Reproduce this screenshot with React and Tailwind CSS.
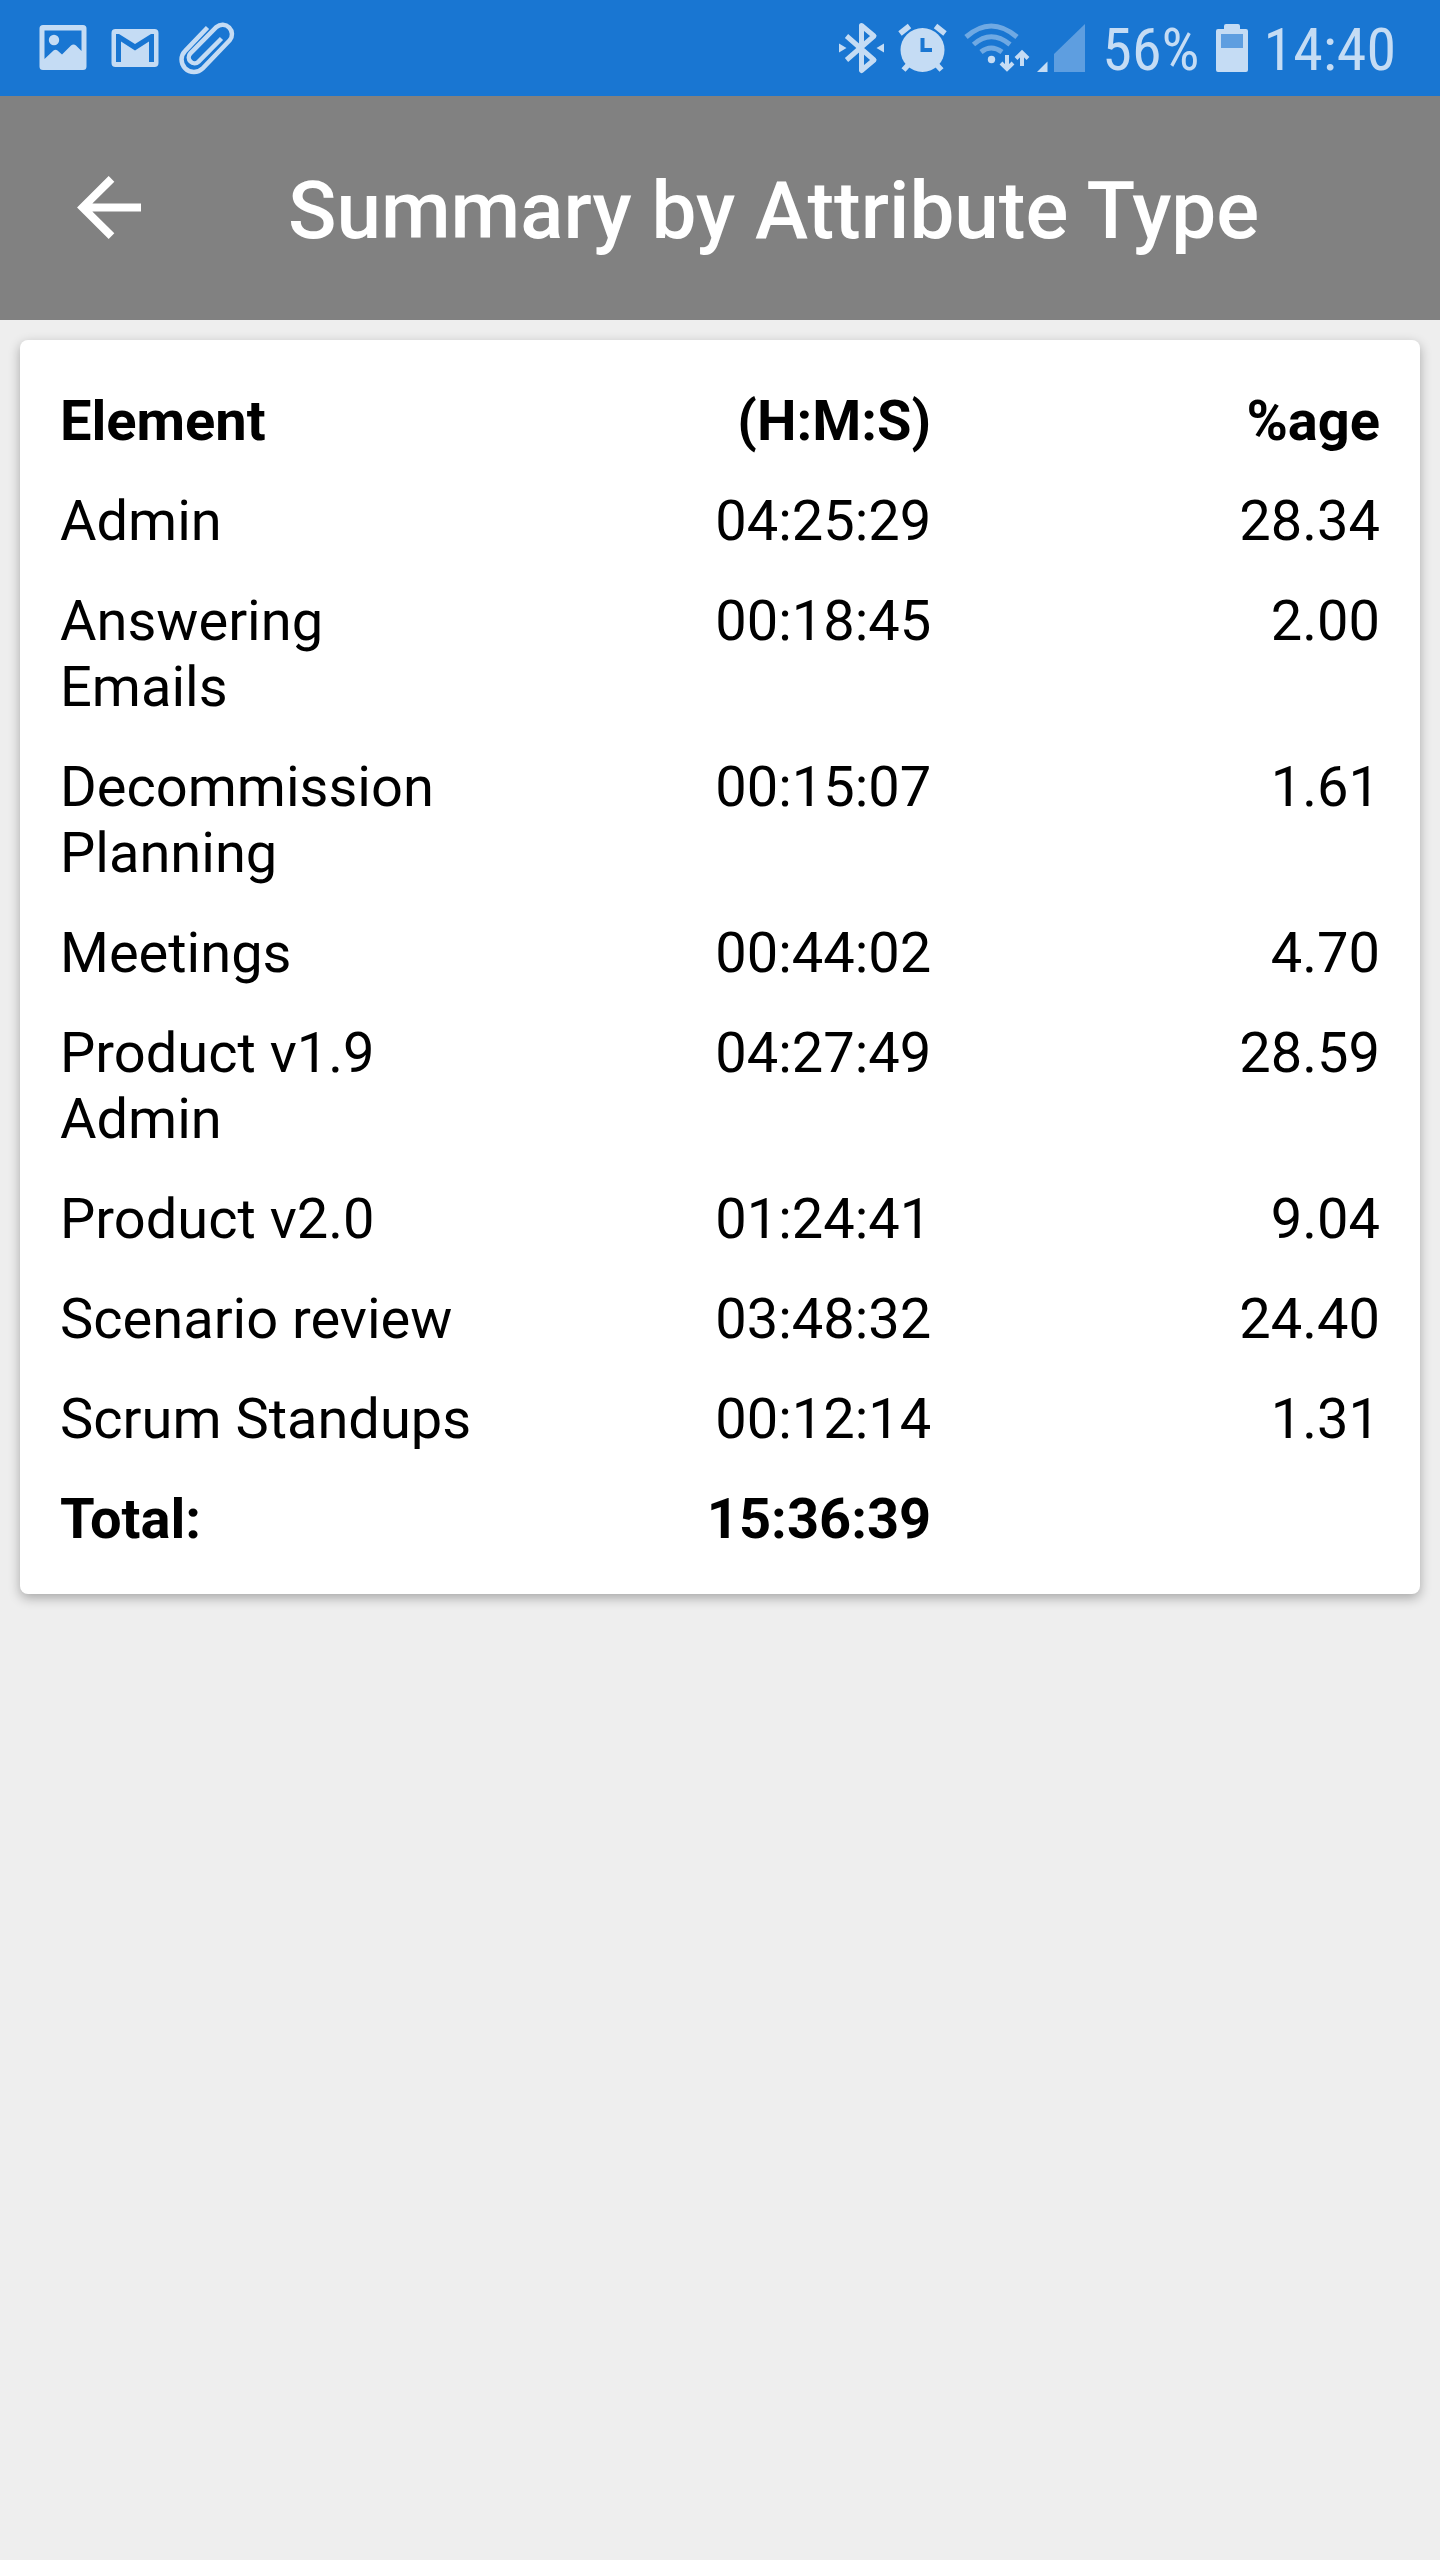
const ROWS = [
  ["Admin", "04:25:29", "28.34"],
  ["Answering Emails", "00:18:45", "2.00"],
  ["Decommission Planning", "00:15:07", "1.61"],
  ["Meetings", "00:44:02", "4.70"],
  ["Product v1.9 Admin", "04:27:49", "28.59"],
  ["Product v2.0", "01:24:41", "9.04"],
  ["Scenario review", "03:48:32", "24.40"],
  ["Scrum Standups", "00:12:14", "1.31"],
];

function NotificationIcons() {
  return (
    <svg width="240" height="96" viewBox="0 0 240 96" fill="none" aria-hidden="true">
      <path fill="currentColor" fillRule="evenodd" d="M43 25H83Q86.500 25 86.500 28.500V66.500Q86.500 70 83 70H43Q39.500 70 39.500 66.500V28.500Q39.500 25 43 25ZM44.500 30.500V59L53.500 50.500Q55.500 49 57.500 50.500L62 54.500L71 45.500Q73.500 43.500 76 45.500L81.500 51V30.500Z" />
      <circle cx="54" cy="40" r="5.200" fill="currentColor" />
      <path fill="currentColor" fillRule="evenodd" d="M115.500 29H154.500Q158.500 29 158.500 33V63Q158.500 67 154.500 67H115.500Q111.500 67 111.500 63V33Q111.500 29 115.500 29ZM116 34V62H121V41.500L135 50.500L149 41.500V62H154V34H151L135 44L119 34Z" />
      <path stroke="currentColor" strokeWidth="4.500" d="M207.500 27.500L185.200 50.800A12.400 12.400 0 0 0 202.700 68.400L229.700 40.300A9.400 9.400 0 0 0 216.500 27L190.400 53.400A5.800 5.800 0 0 0 198.600 61.600L221.500 38.500" />
    </svg>
  );
}

function ConnectivityIcons() {
  return (
    <svg width="270" height="96" viewBox="830 0 270 96" fill="none" aria-hidden="true">
      <path stroke="currentColor" strokeWidth="5" strokeLinejoin="round" d="M844.500 36L872 60L859.500 70.500V25.500L872 36L844.500 60" />
      <path fill="currentColor" d="M837 43.500L844.500 48L837 52.500ZM882 43.500L874.500 48L882 52.500Z" />
      <circle cx="920.500" cy="50" r="22" fill="currentColor" />
      <path stroke="currentColor" strokeWidth="5.500" d="M898 33.500L907.500 26M943 33.500L933.500 26M901.500 70L907 64M939.500 70L934 64" />
      <path className="stroke-[#1976d2]" strokeWidth="4" d="M920.500 38V50H930" />
      <g stroke="currentColor" strokeWidth="5" opacity="0.500">
        <path d="M964 37Q989 15 1015 37M971.500 44.500Q989 29 1008 44.500M979 52Q989 44 1000 52" />
      </g>
      <circle cx="989.500" cy="59.500" r="3.700" fill="currentColor" />
      <path stroke="currentColor" strokeWidth="4" d="M1005 55V68M999 63L1005 69L1011 63M1020 66V53M1014 58.500L1020 52.500L1026 58.500" />
      <path fill="currentColor" d="M1045.500 61.500V72H1035Z" />
      <path fill="currentColor" opacity="0.400" d="M1083 24V72H1052V54Z" />
    </svg>
  );
}

function BatteryIcon() {
  return (
    <svg width="32" height="48" viewBox="0 0 32 48" fill="currentColor" aria-hidden="true">
      <path fillRule="evenodd" d="M10 0H22Q24 0 24 2V5H30Q32 5 32 7V46Q32 48 30 48H2Q0 48 0 46V7Q0 5 2 5H8V2Q8 0 10 0ZM5 10V24H27V10Z" />
      <path opacity="0.400" d="M5 10H27V24H5Z" />
    </svg>
  );
}

export default function App() {
  return (
    <div className="min-h-screen bg-[#eeeeee] text-black font-['Roboto',sans-serif]">
      <div className="flex h-24 items-center justify-between bg-[#1976d2] pr-11 text-[#c5dcf4]">
        <NotificationIcons />
        <div className="flex items-center text-[60px] leading-none font-['Roboto_Condensed',Roboto,sans-serif]">
          <ConnectivityIcons />
          <span className="pt-1">56%</span>
          <span className="ml-4 mr-4"><BatteryIcon /></span>
          <span className="pt-1">14:40</span>
        </div>
      </div>
      <header className="flex h-56 items-center bg-[#818181] text-white">
        <button type="button" aria-label="Back" className="ml-[77px] shrink-0">
          <svg width="64" height="64" viewBox="0 0 64 64" fill="none" stroke="currentColor" strokeWidth="8" aria-hidden="true">
            <path d="M34.500 2.800L5.700 31.500L34.500 60.200M5 31.500H64" />
          </svg>
        </button>
        <h1 className="ml-[147px] pt-1.5 text-[80px] leading-[96px] font-medium">Summary by Attribute Type</h1>
      </header>
      <main className="p-5">
        <section className="rounded-lg bg-white px-10 pt-[31px] pb-[25px] shadow-[0_4px_12px_rgba(0,0,0,0.3)]">
          <table className="w-full table-fixed text-[56px] leading-[66px]">
            <colgroup>
              <col className="w-[33%]" />
              <col className="w-[33%]" />
              <col />
            </colgroup>
            <thead>
              <tr>
                <th scope="col" className="py-[17px] text-left font-bold">Element</th>
                <th scope="col" className="py-[17px] text-right font-bold">(H:M:S)</th>
                <th scope="col" className="py-[17px] text-right font-bold">%age</th>
              </tr>
            </thead>
            <tbody>
              {ROWS.map(([name, time, share]) => (
                <tr key={name} className="align-top">
                  <td className="py-[17px]">{name}</td>
                  <td className="py-[17px] text-right">{time}</td>
                  <td className="py-[17px] text-right">{share}</td>
                </tr>
              ))}
            </tbody>
            <tfoot>
              <tr>
                <th scope="row" className="py-[17px] text-left font-bold">Total:</th>
                <td className="py-[17px] text-right font-bold">15:36:39</td>
                <td />
              </tr>
            </tfoot>
          </table>
        </section>
      </main>
    </div>
  );
}
